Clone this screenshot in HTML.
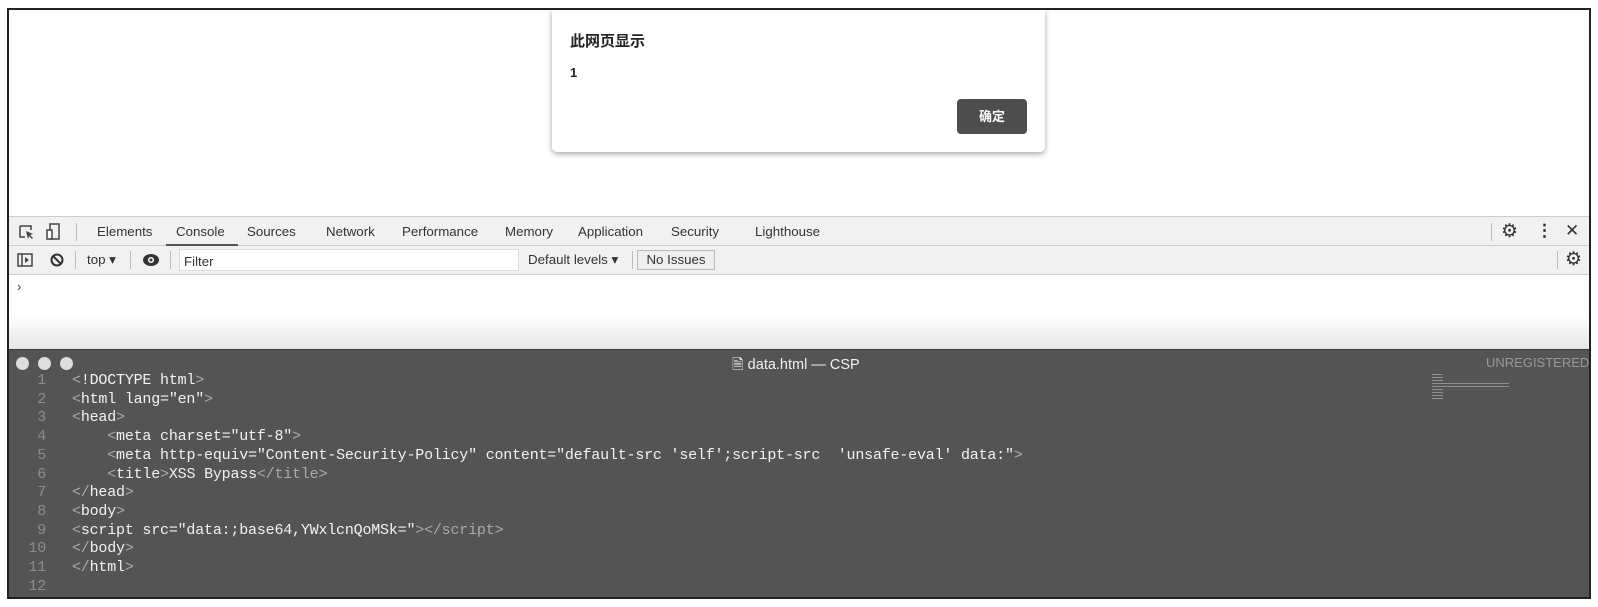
<!DOCTYPE html>
<html><head><meta charset="utf-8"><style>
*{margin:0;padding:0;box-sizing:border-box}
body{width:1598px;height:607px;background:#fff;position:relative;overflow:hidden;font-family:"Liberation Sans","Noto Sans CJK SC",sans-serif}
.frame{position:absolute;left:7px;top:8px;width:1584px;height:591px;border:2px solid #222;background:#fff;overflow:hidden}
.dlg{position:absolute;left:543px;top:0;width:493px;height:142px;background:#fff;border-radius:0 0 5px 5px;box-shadow:0 2px 6px rgba(0,0,0,.35)}
.dlg .t{position:absolute;left:18px;top:20px;font-size:15px;font-weight:bold;color:#222}
.dlg .m{position:absolute;left:18px;top:55px;font-size:13px;font-weight:bold;color:#222}
.dlg .b{position:absolute;left:405px;top:89px;width:70px;height:35px;background:#4d4d4d;border-radius:4px;color:#fff;font-size:13px;text-align:center;line-height:35px;font-weight:bold}
.tb1{position:absolute;left:0;top:206px;width:100%;height:30px;background:#f1f1f1;border-top:1px solid #ccc;border-bottom:1px solid #ccc;font-size:13.3px;color:#333}
.tb2{position:absolute;left:0;top:236px;width:100%;height:29px;background:#f1f1f1;border-bottom:1px solid #ccc;font-size:13.3px;color:#333}
.abs{position:absolute}
.tab{position:absolute;top:7px}
.sep{position:absolute;width:1px;height:18px;background:#bbb}
.cons{position:absolute;left:0;top:265px;width:100%;height:74px;background:linear-gradient(#fff 0,#fff 40px,#e6e6e6 74px)}
.ed{position:absolute;left:0;top:339px;width:100%;height:250px;background:#545454;border-top:1px solid #3a3a3a}
.dot{position:absolute;top:7px;width:13px;height:13px;border-radius:50%;background:#ddd}
.code{position:absolute;left:0;top:22px;font-family:"Liberation Mono",monospace;font-size:15px;line-height:18.7px;color:#f2f2f2;white-space:pre;letter-spacing:-.2px}
.ln{display:inline-block;width:37px;text-align:right;color:#8c8c8c;margin-right:26px}
.g{color:#aaa}
</style></head><body>
<div class="frame">
 <div class="dlg"><div class="t">此网页显示</div><div class="m">1</div><div class="b">确定</div></div>
 <div class="tb1">
  <svg class="abs" style="left:9px;top:7px" width="18" height="16" viewBox="0 0 18 16"><path d="M2 2h11v4M2 2v11h5" fill="none" stroke="#444" stroke-width="1.5"/><path d="M8 7l7 3-3 1 3 3-1 1-3-3-1 3z" fill="#444"/></svg>
  <svg class="abs" style="left:37px;top:6px" width="14" height="18" viewBox="0 0 14 18"><rect x="4" y="1" width="9" height="15" fill="none" stroke="#444" stroke-width="1.5"/><rect x="1" y="7" width="5" height="9" fill="#fff" stroke="#444" stroke-width="1.5"/></svg>
  <div class="sep" style="left:67px;top:6px"></div>
  <span class="tab" style="left:88px">Elements</span>
  <span class="tab" style="left:167px">Console</span>
  <div class="abs" style="left:157px;top:27px;width:72px;height:2px;background:#555"></div>
  <span class="tab" style="left:238px">Sources</span>
  <span class="tab" style="left:317px">Network</span>
  <span class="tab" style="left:393px">Performance</span>
  <span class="tab" style="left:496px">Memory</span>
  <span class="tab" style="left:569px">Application</span>
  <span class="tab" style="left:662px">Security</span>
  <span class="tab" style="left:746px">Lighthouse</span>
  <div class="sep" style="left:1482px;top:6px"></div>
  <span class="abs" style="left:1492px;top:3px;font-size:19px;color:#333">⚙</span>
  <span class="abs" style="left:1527px;top:4px;font-size:17px;font-weight:bold;color:#333">⋮</span>
  <span class="abs" style="left:1556px;top:4px;font-size:17px;color:#333">✕</span>
 </div>
 <div class="tb2">
  <svg class="abs" style="left:8px;top:7px" width="16" height="14"><rect x="1" y="1" width="14" height="12" fill="none" stroke="#444" stroke-width="1.5"/><line x1="5" y1="1" x2="5" y2="13" stroke="#444" stroke-width="1.5"/><path d="M8 4l4 3-4 3z" fill="#444"/></svg>
  <svg class="abs" style="left:41px;top:7px" width="14" height="14"><circle cx="7" cy="7" r="5.5" fill="none" stroke="#333" stroke-width="2"/><line x1="3" y1="3" x2="11" y2="11" stroke="#333" stroke-width="2"/></svg>
  <div class="sep" style="left:66px;top:5px"></div>
  <span class="abs" style="left:78px;top:6px">top ▾</span>
  <div class="sep" style="left:121px;top:5px"></div>
  <svg class="abs" style="left:133px;top:7px" width="18" height="14"><ellipse cx="9" cy="7" rx="8" ry="6" fill="#333"/><circle cx="9" cy="7" r="3" fill="#fff"/><circle cx="9" cy="7" r="1.5" fill="#333"/></svg>
  <div class="sep" style="left:161px;top:5px"></div>
  <div class="abs" style="left:170px;top:3px;width:340px;height:22px;background:#fff;border:1px solid #ddd;padding:4px 4px">Filter</div>
  <span class="abs" style="left:519px;top:6px">Default levels ▾</span>
  <div class="sep" style="left:623px;top:5px"></div>
  <div class="abs" style="left:628px;top:4px;width:78px;height:20px;border:1px solid #bbb;background:#eee;text-align:center;line-height:18px">No Issues</div>
  <div class="sep" style="left:1548px;top:5px"></div>
  <span class="abs" style="left:1556px;top:2px;font-size:19px;color:#333">⚙</span>
 </div>
 <div class="cons"><span class="abs" style="left:8px;top:4px;font-size:13px;color:#444">›</span></div>
 <div class="ed">
  <div class="dot" style="left:7px"></div><div class="dot" style="left:29px"></div><div class="dot" style="left:51px"></div>
  <div class="abs" style="left:723px;top:4px;font-size:14.5px;color:#f0f0f0">🗎 data.html — CSP</div>
  <div class="abs" style="left:1477px;top:5px;font-size:13px;color:#9a9a9a">UNREGISTERED</div>
  <div class="abs" style="left:1423px;top:24px;width:110px;height:26px;opacity:.5;background:repeating-linear-gradient(#ccc 0 1px,transparent 1px 3px);clip-path:polygon(0 0,10% 0,10% 30%,70% 30%,70% 50%,10% 50%,10% 100%,0 100%)"></div>
<div class="code"><span class="ln">1</span><span class="g">&lt;</span>!DOCTYPE html<span class="g">&gt;</span>
<span class="ln">2</span><span class="g">&lt;</span>html lang="en"<span class="g">&gt;</span>
<span class="ln">3</span><span class="g">&lt;</span>head<span class="g">&gt;</span>
<span class="ln">4</span>    <span class="g">&lt;</span>meta charset="utf-8"<span class="g">&gt;</span>
<span class="ln">5</span>    <span class="g">&lt;</span>meta http-equiv="Content-Security-Policy" content="default-src 'self';script-src  'unsafe-eval' data:"<span class="g">&gt;</span>
<span class="ln">6</span>    <span class="g">&lt;</span>title<span class="g">&gt;</span>XSS Bypass<span class="g">&lt;/title&gt;</span>
<span class="ln">7</span><span class="g">&lt;/</span>head<span class="g">&gt;</span>
<span class="ln">8</span><span class="g">&lt;</span>body<span class="g">&gt;</span>
<span class="ln">9</span><span class="g">&lt;</span>script src="data:;base64,YWxlcnQoMSk="<span class="g">&gt;&lt;/script&gt;</span>
<span class="ln">10</span><span class="g">&lt;/</span>body<span class="g">&gt;</span>
<span class="ln">11</span><span class="g">&lt;/</span>html<span class="g">&gt;</span>
<span class="ln">12</span></div>
 </div>
</div>
</body></html>
